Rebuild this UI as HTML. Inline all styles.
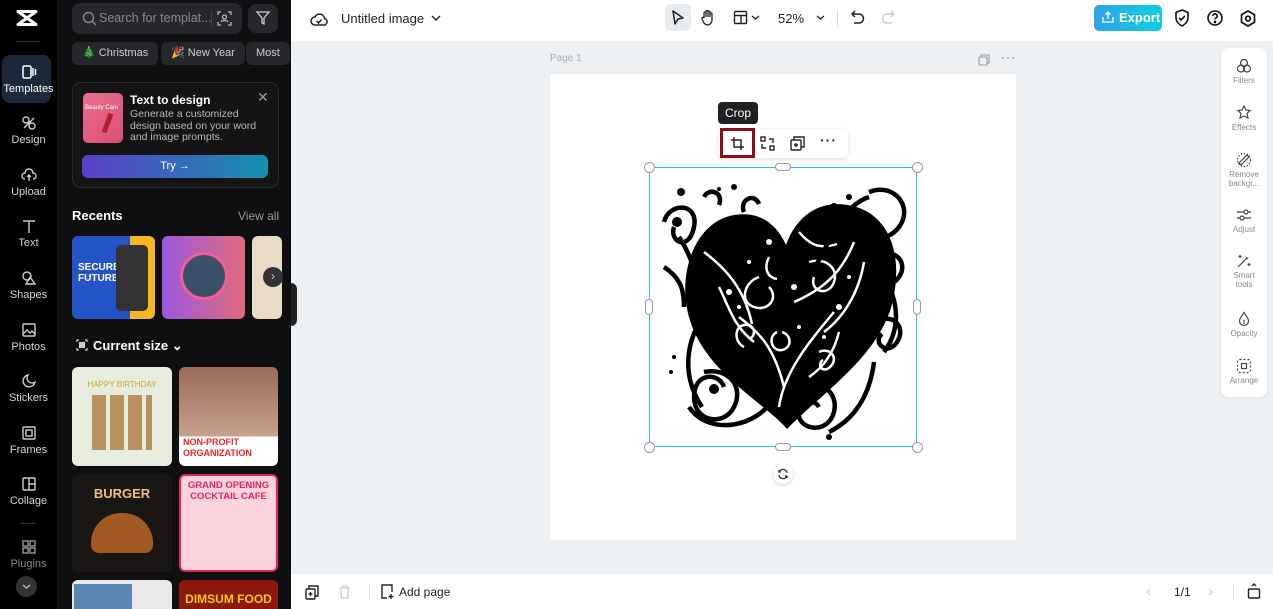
<!DOCTYPE html>
<html><head><meta charset="utf-8">
<style>
*{box-sizing:border-box;margin:0;padding:0}
body{width:1273px;height:609px;overflow:hidden;font-family:"Liberation Sans",sans-serif;background:#eef1f4;position:relative}
.rail{position:absolute;left:0;top:0;width:57px;height:609px;background:#000}
.panel{position:absolute;left:57px;top:0;width:234px;height:609px;background:#0f0f11;overflow:hidden}
.ri{position:absolute;left:0;width:57px;text-align:center;color:#d6d6d6;font-size:11px}
.ri svg{display:block;margin:0 auto 3px}
.top{position:absolute;left:291px;top:0;right:0;height:41px;background:#fff}
.bot{position:absolute;left:291px;bottom:0;right:0;height:35px;background:#fff}
.t{position:absolute;white-space:nowrap}
.chip{position:absolute;top:42px;height:23px;background:#26272b;border-radius:6px;color:#d0d0d0;font-size:11px;line-height:23px;padding:0 10px}
.thumb{position:absolute;border-radius:6px;overflow:hidden}
.rp{position:absolute;left:1221px;top:48px;width:46px;height:349px;background:#fff;border-radius:8px;box-shadow:0 1px 4px rgba(0,0,0,.06)}
.rpi{position:absolute;left:0;width:46px;text-align:center;font-size:8px;color:#888;line-height:9px}
.rpi svg{display:block;margin:0 auto 2px}
</style></head><body>

<div class="rail">
  <svg style="position:absolute;left:15px;top:9px" width="24" height="18" viewBox="0 0 24 18"><path d="M3 2.5h18L3 15.5h18" fill="none" stroke="#fff" stroke-width="3" stroke-linejoin="round" stroke-linecap="round"/><path d="M3 2.5L21 15.5" fill="none" stroke="#fff" stroke-width="3" stroke-linecap="round"/></svg>
  <div style="position:absolute;left:16px;top:41px;width:24px;height:1px;background:#333"></div>
  <div style="position:absolute;left:2px;top:55px;width:49px;height:48px;background:#1b2a3a;border-radius:8px"></div>
  <div class="ri" style="top:64px;color:#fff"><svg width="16" height="16" viewBox="0 0 16 16" fill="none" stroke="#fff" stroke-width="1.5"><rect x="2" y="2" width="8" height="12" rx="1.5"/><path d="M12 4v8M14.5 5v6"/></svg>Templates</div>
  <div class="ri" style="top:115px"><svg width="16" height="16" viewBox="0 0 16 16" fill="none" stroke="#ccc" stroke-width="1.4"><circle cx="5" cy="5" r="3"/><circle cx="11" cy="11" r="3"/><path d="M3 13L13 3"/></svg>Design</div>
  <div class="ri" style="top:167px"><svg width="16" height="16" viewBox="0 0 16 16" fill="none" stroke="#ccc" stroke-width="1.4"><path d="M4 12a3 3 0 010-6 4 4 0 018 0 3 3 0 010 6M8 8v6M6 10l2-2 2 2"/></svg>Upload</div>
  <div class="ri" style="top:218px"><svg width="16" height="16" viewBox="0 0 16 16" fill="none" stroke="#ccc" stroke-width="1.4"><path d="M2 3h12M8 3v12"/></svg>Text</div>
  <div class="ri" style="top:270px"><svg width="16" height="16" viewBox="0 0 16 16" fill="none" stroke="#ccc" stroke-width="1.4"><circle cx="6" cy="6" r="4"/><path d="M9 7l5 7H5z"/></svg>Shapes</div>
  <div class="ri" style="top:322px"><svg width="16" height="16" viewBox="0 0 16 16" fill="none" stroke="#ccc" stroke-width="1.4"><rect x="2" y="2" width="12" height="12" rx="1"/><path d="M2 12l4-4 3 3 2-2 3 3"/></svg>Photos</div>
  <div class="ri" style="top:373px"><svg width="16" height="16" viewBox="0 0 16 16" fill="none" stroke="#ccc" stroke-width="1.4"><path d="M14 9A6 6 0 117 2a5 5 0 007 7z"/></svg>Stickers</div>
  <div class="ri" style="top:425px"><svg width="16" height="16" viewBox="0 0 16 16" fill="none" stroke="#ccc" stroke-width="1.4"><rect x="2" y="2" width="12" height="12" rx="1"/><rect x="5" y="5" width="6" height="6"/></svg>Frames</div>
  <div class="ri" style="top:476px"><svg width="16" height="16" viewBox="0 0 16 16" fill="none" stroke="#ccc" stroke-width="1.4"><rect x="2" y="2" width="12" height="12" rx="1"/><path d="M8 2v12M8 8h6"/></svg>Collage</div>
  <div style="position:absolute;left:20px;top:523px;width:16px;height:1px;background:#333"></div>
  <div class="ri" style="top:539px;color:#888"><svg width="16" height="16" viewBox="0 0 16 16" fill="none" stroke="#999" stroke-width="1.4"><rect x="2" y="2" width="5" height="5"/><rect x="9" y="2" width="5" height="5"/><rect x="2" y="9" width="5" height="5"/><rect x="9" y="9" width="5" height="5"/></svg>Plugins</div>
  <div style="position:absolute;left:16px;top:576px;width:21px;height:21px;border-radius:50%;background:#333"><svg width="21" height="21" viewBox="0 0 21 21"><path d="M7 9l3.5 3 3.5-3" fill="none" stroke="#bbb" stroke-width="1.3"/></svg></div>
</div>

<div class="panel">
  <div style="position:absolute;left:15px;top:3px;width:170px;height:31px;background:#26272b;border-radius:8px"></div>
  <svg style="position:absolute;left:25px;top:11px" width="15" height="15" viewBox="0 0 15 15" fill="none" stroke="#888" stroke-width="1.4"><circle cx="6.5" cy="6.5" r="5"/><path d="M10 10l4 4"/></svg>
  <div class="t" style="left:42px;top:11px;font-size:12.5px;color:#8a8a8a">Search for templat...</div>
  <div style="position:absolute;left:154px;top:12px;width:1px;height:14px;background:#444"></div>
  <svg style="position:absolute;left:160px;top:11px" width="15" height="15" viewBox="0 0 15 15" fill="none" stroke="#bbb" stroke-width="1.3"><path d="M1 4V1h3M11 1h3v3M14 11v3h-3M4 14H1v-3"/><circle cx="7.5" cy="6" r="2"/><path d="M4 11c1-2 6-2 7 0"/></svg>
  <div style="position:absolute;left:191px;top:4px;width:30px;height:29px;background:#26272b;border-radius:8px"></div>
  <svg style="position:absolute;left:198px;top:10px" width="16" height="16" viewBox="0 0 16 16" fill="none" stroke="#ccc" stroke-width="1.3"><path d="M2 2h12l-5 6v6l-2-1V8z"/></svg>
  <div class="chip" style="left:15px">🎄 Christmas</div>
  <div class="chip" style="left:104px">🎉 New Year</div>
  <div class="chip" style="left:189px">Most</div>
  <div style="position:absolute;left:15px;top:82px;width:207px;height:106px;border:1px solid #2a2a2e;border-radius:9px;background:#141416"></div>
  <div style="position:absolute;left:26px;top:93px;width:40px;height:50px;border-radius:5px;background:linear-gradient(135deg,#e86f8f,#d94f73)"><div style="font-size:6px;color:#fff;margin:12px 0 0 2px">Beauty Care</div><div style="position:absolute;left:22px;top:20px;width:5px;height:20px;background:#b02030;transform:rotate(20deg)"></div></div>
  <div class="t" style="left:73px;top:93px;font-size:12px;font-weight:bold;color:#fff">Text to design</div>
  <div class="t" style="left:73px;top:109px;font-size:10.5px;color:#bbb;line-height:11.7px">Generate a customized<br>design based on your word<br>and image prompts.</div>
  <div class="t" style="left:200px;top:89px;font-size:14px;color:#999">✕</div>
  <div style="position:absolute;left:25px;top:155px;width:186px;height:23px;border-radius:6px;background:linear-gradient(90deg,#5b3fc7,#1591ae);color:#fff;font-size:11px;text-align:center;line-height:23px">Try →</div>
  <div class="t" style="left:15px;top:208px;font-size:13px;font-weight:bold;color:#fff">Recents</div>
  <div class="t" style="left:181px;top:209px;font-size:12px;color:#999">View all</div>
  <div class="thumb" style="left:15px;top:236px;width:83px;height:83px;background:linear-gradient(90deg,#2554c7 0 70%,#f6b820 70%)"><div style="color:#fff;font-weight:bold;font-size:10px;position:absolute;left:6px;top:26px;line-height:11px;width:40px">SECURE<br>FUTURE</div><div style="position:absolute;left:44px;top:9px;width:32px;height:66px;background:#333;border-radius:5px"></div></div>
  <div class="thumb" style="left:105px;top:236px;width:83px;height:83px;background:linear-gradient(90deg,#9b59e0,#e06a7d)"><div style="position:absolute;left:18px;top:16px;width:48px;height:48px;border-radius:50%;border:3px solid #f35d9a;background:#3c5068"></div></div>
  <div class="thumb" style="left:195px;top:236px;width:30px;height:83px;background:#e8dcc4"></div>
  <div style="position:absolute;left:206px;top:267px;width:20px;height:20px;border-radius:50%;background:#333;color:#ccc;font-size:12px;text-align:center;line-height:19px">›</div>
  <svg style="position:absolute;left:19px;top:339px" width="12" height="12" viewBox="0 0 12 12" fill="none" stroke="#ccc" stroke-width="1.2"><path d="M1 3V1h2M9 1h2v2M11 9v2H9M3 11H1V9"/><rect x="3.5" y="3.5" width="5" height="5" fill="#ccc"/></svg>
  <div class="t" style="left:36px;top:338px;font-size:13px;font-weight:bold;color:#fff">Current size ⌄</div>
  <div class="thumb" style="left:15px;top:367px;width:100px;height:99px;background:#e8ecdf"><div style="color:#c9a52d;font-size:8px;text-align:center;margin-top:13px">HAPPY BIRTHDAY</div><div style="margin:6px 20px;height:55px;background:repeating-linear-gradient(90deg,#b8925e 0 14px,#e8ecdf 14px 18px)"></div></div>
  <div class="thumb" style="left:122px;top:367px;width:99px;height:99px;background:linear-gradient(180deg,#9a6a5a 0,#c8a090 70%,#fff 70%)"><div style="position:absolute;left:4px;top:70px;color:#e22;font-weight:bold;font-size:9px;line-height:11px">NON-PROFIT<br>ORGANIZATION</div></div>
  <div class="thumb" style="left:15px;top:474px;width:100px;height:98px;background:#1a1614"><div style="color:#e8c27a;font-weight:bold;font-size:13px;text-align:center;margin-top:12px">BURGER</div><div style="margin:12px auto 0;width:62px;height:40px;border-radius:30px 30px 8px 8px;background:#a35a22"></div></div>
  <div class="thumb" style="left:122px;top:474px;width:99px;height:98px;background:#fbd3dd;border:2px solid #e0245e"><div style="color:#e0245e;font-weight:bold;font-size:9.5px;text-align:center;margin-top:4px;line-height:11px">GRAND OPENING<br>COCKTAIL CAFE</div></div>
  <div class="thumb" style="left:15px;top:580px;width:100px;height:40px;background:#e8e8e8"><div style="margin:4px 0 0 2px;width:58px;height:36px;background:#5a86b4"></div></div>
  <div class="thumb" style="left:122px;top:580px;width:99px;height:40px;background:#8c1a0c"><div style="color:#f5c518;font-weight:bold;font-size:12px;text-align:center;margin-top:12px">DIMSUM FOOD</div></div>
</div>
<div style="position:absolute;left:291px;top:283px;width:6px;height:43px;background:#222;border-radius:0 6px 6px 0"></div>

<div class="top">
  <svg style="position:absolute;left:19px;top:11px" width="18" height="16" viewBox="0 0 18 16" fill="none" stroke="#222" stroke-width="1.5"><path d="M5 14a4 4 0 010-8 5 5 0 019.5 1.5A3.3 3.3 0 0113 14z"/><path d="M6.5 10l2 2 3-3.5"/></svg>
  <div class="t" style="left:50px;top:11px;font-size:13px;color:#222">Untitled image</div>
  <svg style="position:absolute;left:140px;top:14px" width="10" height="8" viewBox="0 0 10 8"><path d="M1 2l4 4 4-4" fill="none" stroke="#222" stroke-width="1.4"/></svg>
  <div style="position:absolute;left:374px;top:4px;width:26px;height:27px;background:#e9ecef;border-radius:5px"></div>
  <svg style="position:absolute;left:380px;top:10px" width="14" height="16" viewBox="0 0 14 16"><path d="M2 1l10 7-5 1-3 5z" fill="none" stroke="#222" stroke-width="1.5" stroke-linejoin="round"/></svg>
  <svg style="position:absolute;left:409px;top:9px" width="16" height="17" viewBox="0 0 16 17" fill="none" stroke="#222" stroke-width="1.3"><path d="M4 9V4a1 1 0 012 0v4V2.5a1 1 0 012 0V8V3a1 1 0 012 0v5-3a1 1 0 012 0v6a5 5 0 01-5 5H8a5 5 0 01-4-2l-2-4a1 1 0 012-1z"/></svg>
  <svg style="position:absolute;left:442px;top:10px" width="15" height="15" viewBox="0 0 15 15" fill="none" stroke="#222" stroke-width="1.4"><rect x="1.5" y="1.5" width="12" height="12" rx="1"/><path d="M1.5 5.5h12M8 5.5v8"/></svg>
  <svg style="position:absolute;left:460px;top:14px" width="9" height="7" viewBox="0 0 9 7"><path d="M1 2l3.5 3L8 2" fill="none" stroke="#222" stroke-width="1.3"/></svg>
  <div class="t" style="left:487px;top:11px;font-size:13px;color:#222">52%</div>
  <svg style="position:absolute;left:525px;top:14px" width="9" height="7" viewBox="0 0 9 7"><path d="M1 2l3.5 3L8 2" fill="none" stroke="#222" stroke-width="1.3"/></svg>
  <div style="position:absolute;left:546px;top:10px;width:1px;height:16px;background:#ddd"></div>
  <svg style="position:absolute;left:560px;top:10px" width="14" height="15" viewBox="0 0 14 15" fill="none" stroke="#222" stroke-width="1.5"><path d="M4 1L1 4l3 3"/><path d="M1 4h7a4.5 4.5 0 010 9H3"/></svg>
  <svg style="position:absolute;left:590px;top:10px" width="14" height="15" viewBox="0 0 14 15" fill="none" stroke="#ccc" stroke-width="1.4"><path d="M10 1l3 3-3 3"/><path d="M13 4H6a4.5 4.5 0 000 9h5"/></svg>
  <div style="position:absolute;left:803px;top:5px;width:68px;height:26px;border-radius:5px;background:linear-gradient(90deg,#2fa4e7,#0ecde0);color:#fff;font-size:13px;font-weight:bold;line-height:26px;padding-left:25px">Export</div>
  <svg style="position:absolute;left:811px;top:11px" width="12" height="12" viewBox="0 0 12 12" fill="none" stroke="#fff" stroke-width="1.3"><path d="M1 6v5h10V6M6 8V1M3.5 3.5L6 1l2.5 2.5"/></svg>
  <svg style="position:absolute;left:883px;top:9px" width="16" height="18" viewBox="0 0 16 18" fill="none" stroke="#111" stroke-width="1.6"><path d="M8 1l6 2.5v5c0 4-3 7-6 8.5C5 15.5 2 12.5 2 8.5v-5z"/><path d="M5 9l2 2 4-4"/></svg>
  <svg style="position:absolute;left:916px;top:10px" width="16" height="16" viewBox="0 0 16 16" fill="none" stroke="#111" stroke-width="1.6"><circle cx="8" cy="8" r="7"/><path d="M5.8 6a2.2 2.2 0 114 1.3c-.8.6-1.8 1-1.8 2.2"/><circle cx="8" cy="12" r=".6" fill="#111"/></svg>
  <svg style="position:absolute;left:949px;top:10px" width="16" height="17" viewBox="0 0 16 17" fill="none" stroke="#111" stroke-width="1.7"><path d="M8 1l6.5 3.75v7.5L8 16l-6.5-3.75v-7.5z"/><circle cx="8" cy="8.5" r="2.3"/></svg>
</div>

<div class="t" style="left:550px;top:53px;font-size:10px;color:#aaa">Page 1</div>
<svg style="position:absolute;left:978px;top:54px" width="12" height="12" viewBox="0 0 12 12" fill="none" stroke="#999" stroke-width="1.1"><rect x="1" y="3" width="8" height="8" rx="1"/><path d="M3 3V1h8v8H9"/></svg>
<div class="t" style="left:1001px;top:50px;font-size:12px;color:#666;letter-spacing:1px">···</div>
<div style="position:absolute;left:550px;top:74px;width:466px;height:466px;background:#fff"></div>

<!-- heart artwork -->
<svg style="position:absolute;left:649px;top:167px" width="268" height="280" viewBox="0 0 268 280">
  <path d="M138 262C115 235 55 205 40 150 28 108 45 55 85 48c25-4 42 8 52 30 10-28 32-45 62-40 42 7 55 50 45 95-12 55-70 92-106 129z" fill="#000"/>
  <g fill="none" stroke="#fff" stroke-width="2.5">
    <path d="M110 110c-15 5-20 25-5 30s25-10 15-20"/><path d="M160 95c15-5 30 5 25 20s-25 10-20-5"/>
    <path d="M128 165c-10 5-5 20 5 18s10-15 0-18"/><path d="M185 145c-25 30-50 60-55 95"/>
    <path d="M90 150c20 15 35 30 45 70"/><path d="M205 75c-10 25-25 45-60 60"/>
    <path d="M150 65c10 12 20 18 38 12"/><path d="M55 85c20 15 40 35 48 72"/>
    <path d="M95 180c-10-5-10-20 0-22s14 10 5 14"/><path d="M170 185c10-5 20 5 12 14s-15-2-8-6"/>
    <path d="M120 90c-5 10-3 20 8 22"/><path d="M160 210c15-10 25-25 30-45"/>
    <path d="M70 120c10 20 15 40 35 55"/><path d="M215 95c-5 30-20 55-40 70"/>
  </g>
  <g fill="#fff"><circle cx="80" cy="125" r="3"/><circle cx="90" cy="140" r="2"/><circle cx="190" cy="140" r="3"/><circle cx="175" cy="170" r="2"/><circle cx="120" cy="75" r="3"/><circle cx="145" cy="120" r="3"/><circle cx="100" cy="95" r="2"/><circle cx="200" cy="110" r="2"/><circle cx="150" cy="160" r="2"/></g>
  <g fill="none" stroke="#000" stroke-width="4.5">
    <path d="M55 205c25-5 40 15 30 35s-40 15-40-10 25-25 30-10"/>
    <path d="M150 220c20-10 40 5 35 25s-30 20-35 5 15-20 20-10"/>
    <path d="M220 25c25-10 45 15 30 35s-35 5-25-10"/>
    <path d="M230 90c15-10 30 5 20 20s-25 0-15-8"/><path d="M228 155c15-10 30 5 20 20s-25 0-15-8"/>
    <path d="M15 55c5-20 35-20 30 5s-25 15-20 0"/><path d="M55 30c5-10 20-5 15 8"/><path d="M95 45c-5-12 10-20 15-8"/>
    <path d="M30 70c20 30 20 60 25 80"/><path d="M15 100c15 10 20 20 20 40"/>
    <path d="M220 30c-30 10-40 50-60 80"/><path d="M225 110c10 20 0 60-40 100"/>
    <path d="M40 240c20 30 70 20 85-10"/><path d="M180 265c20-10 40-30 45-70"/>
    <path d="M48 160c-10 20-15 50 5 80"/><path d="M240 120c10 20 10 45-5 65"/>
  </g>
  <g fill="#000"><circle cx="65" cy="222" r="5"/><circle cx="163" cy="232" r="4"/><circle cx="28" cy="55" r="5"/><circle cx="32" cy="25" r="4"/><circle cx="185" cy="40" r="4"/><circle cx="200" cy="30" r="3"/><circle cx="85" cy="20" r="3"/><circle cx="70" cy="22" r="2"/><circle cx="195" cy="45" r="2"/><circle cx="25" cy="190" r="2"/><circle cx="22" cy="205" r="2"/><circle cx="180" cy="270" r="3"/></g>
</svg>

<div style="position:absolute;left:649px;top:167px;width:268px;height:280px;border:1.5px solid #25c3dd"></div>
<div style="position:absolute;left:644px;top:162px;width:11px;height:11px;border-radius:50%;background:#fff;border:1px solid #999"></div>
<div style="position:absolute;left:912px;top:162px;width:11px;height:11px;border-radius:50%;background:#fff;border:1px solid #999"></div>
<div style="position:absolute;left:644px;top:442px;width:11px;height:11px;border-radius:50%;background:#fff;border:1px solid #999"></div>
<div style="position:absolute;left:912px;top:442px;width:11px;height:11px;border-radius:50%;background:#fff;border:1px solid #999"></div>
<div style="position:absolute;left:775px;top:163px;width:16px;height:8px;border-radius:4px;background:#fff;border:1px solid #999"></div>
<div style="position:absolute;left:775px;top:443px;width:16px;height:8px;border-radius:4px;background:#fff;border:1px solid #999"></div>
<div style="position:absolute;left:645px;top:299px;width:8px;height:16px;border-radius:4px;background:#fff;border:1px solid #999"></div>
<div style="position:absolute;left:913px;top:299px;width:8px;height:16px;border-radius:4px;background:#fff;border:1px solid #999"></div>
<div style="position:absolute;left:773px;top:464px;width:20px;height:20px;border-radius:50%;background:#fff;box-shadow:0 1px 3px rgba(0,0,0,.2)"><svg width="20" height="20" viewBox="0 0 20 20" fill="none" stroke="#333" stroke-width="1.3"><path d="M14 9a4 4 0 00-7.5-1.5M6 11a4 4 0 007.5 1.5M6 6v2h2M14 14v-2h-2"/></svg></div>

<!-- tooltip & toolbar -->
<div style="position:absolute;left:718px;top:102px;width:40px;height:22px;background:#1f2024;border-radius:4px;color:#fff;font-size:12px;text-align:center;line-height:22px">Crop</div>
<div style="position:absolute;left:718px;top:129px;width:130px;height:29px;background:#fff;border-radius:6px;box-shadow:0 1px 4px rgba(0,0,0,.15)"></div>
<div style="position:absolute;left:720px;top:128px;width:35px;height:30px;border:3px solid #8b0f1a"></div>
<svg style="position:absolute;left:730px;top:136px" width="15" height="15" viewBox="0 0 15 15" fill="none" stroke="#222" stroke-width="1.5"><path d="M4 1v10h10M1 4h10v10"/></svg>
<svg style="position:absolute;left:760px;top:136px" width="15" height="15" viewBox="0 0 15 15" fill="none" stroke="#222" stroke-width="1.4"><rect x="1" y="1" width="4" height="4"/><rect x="10" y="10" width="4" height="4"/><path d="M9 3h4v4M6 12H2V8"/></svg>
<svg style="position:absolute;left:790px;top:136px" width="15" height="15" viewBox="0 0 15 15" fill="none" stroke="#222" stroke-width="1.4"><rect x="1" y="4" width="10" height="10" rx="1"/><path d="M4 4V1h10v10h-3M6 7v4M4 9h4"/></svg>
<div class="t" style="left:820px;top:132px;font-size:14px;color:#222;font-weight:bold;letter-spacing:1px">···</div>

<!-- right panel -->
<div class="rp">
  <div class="rpi" style="top:10px"><svg width="16" height="16" viewBox="0 0 16 16" fill="none" stroke="#444" stroke-width="1.2"><circle cx="8" cy="5" r="3.5"/><circle cx="5" cy="10.5" r="3.5"/><circle cx="11" cy="10.5" r="3.5"/></svg>Filters</div>
  <div class="rpi" style="top:57px"><svg width="16" height="16" viewBox="0 0 16 16" fill="none" stroke="#444" stroke-width="1.2"><path d="M8 1l2 4 4 .5-3 3 1 4.5-4-2-4 2 1-4.5-3-3 4-.5z"/></svg>Effects</div>
  <div class="rpi" style="top:104px"><svg width="16" height="16" viewBox="0 0 16 16" fill="none" stroke="#444" stroke-width="1.2"><path d="M5 13l8-8-2-2-8 8z" /><circle cx="8" cy="8" r="6.5" stroke-dasharray="1.5 1.5"/></svg>Remove<br>backgr...</div>
  <div class="rpi" style="top:159px"><svg width="16" height="16" viewBox="0 0 16 16" fill="none" stroke="#444" stroke-width="1.2"><path d="M1 5h14M1 11h14"/><circle cx="10" cy="5" r="2" fill="#fff"/><circle cx="6" cy="11" r="2" fill="#fff"/></svg>Adjust</div>
  <div class="rpi" style="top:205px"><svg width="16" height="16" viewBox="0 0 16 16" fill="none" stroke="#444" stroke-width="1.2"><path d="M2 14l9-9M10 4l2 2M4 2v3M2.5 3.5h3M13 10v3M11.5 11.5h3"/></svg>Smart<br>tools</div>
  <div class="rpi" style="top:263px"><svg width="16" height="16" viewBox="0 0 16 16" fill="none" stroke="#444" stroke-width="1.2"><path d="M8 1.5C6 5 3.5 7 3.5 10a4.5 4.5 0 009 0C12.5 7 10 5 8 1.5z"/><path d="M8 9v4"/></svg>Opacity</div>
  <div class="rpi" style="top:310px"><svg width="16" height="16" viewBox="0 0 16 16" fill="none" stroke="#444" stroke-width="1.2"><rect x="1.5" y="1.5" width="13" height="13" rx="2" stroke-dasharray="2 2"/><rect x="5.5" y="5.5" width="5" height="5"/></svg>Arrange</div>
</div>

<div class="bot">
  <svg style="position:absolute;left:14px;top:11px" width="14" height="15" viewBox="0 0 14 15" fill="none" stroke="#222" stroke-width="1.4"><rect x="1" y="4" width="9" height="10" rx="1"/><path d="M4 4V1h9v10h-3M5.5 7v4M3.5 9h4"/></svg>
  <svg style="position:absolute;left:47px;top:11px" width="13" height="14" viewBox="0 0 13 14" fill="none" stroke="#ccc" stroke-width="1.3"><path d="M1 3h11M4.5 3V1h4v2M2.5 3l1 10h6l1-10"/></svg>
  <div style="position:absolute;left:78px;top:10px;width:1px;height:15px;background:#ddd"></div>
  <svg style="position:absolute;left:89px;top:10px" width="15" height="16" viewBox="0 0 15 16" fill="none" stroke="#222" stroke-width="1.4"><path d="M7 14H2V1h10v7M11 10v5M8.5 12.5h5"/></svg>
  <div class="t" style="left:108px;top:11px;font-size:12px;color:#222">Add page</div>
  <div class="t" style="left:855px;top:9px;font-size:15px;color:#ccc">‹</div>
  <div class="t" style="left:883px;top:11px;font-size:12px;color:#222">1/1</div>
  <div class="t" style="left:917px;top:9px;font-size:15px;color:#ccc">›</div>
  <div style="position:absolute;left:942px;top:10px;width:1px;height:15px;background:#ddd"></div>
  <svg style="position:absolute;left:956px;top:8px" width="14" height="17" viewBox="0 0 14 17" fill="none" stroke="#222" stroke-width="1.4"><rect x="1.5" y="7" width="11" height="9" rx="1"/><path d="M5 4l2-2 2 2"/></svg>
</div>
</body></html>
